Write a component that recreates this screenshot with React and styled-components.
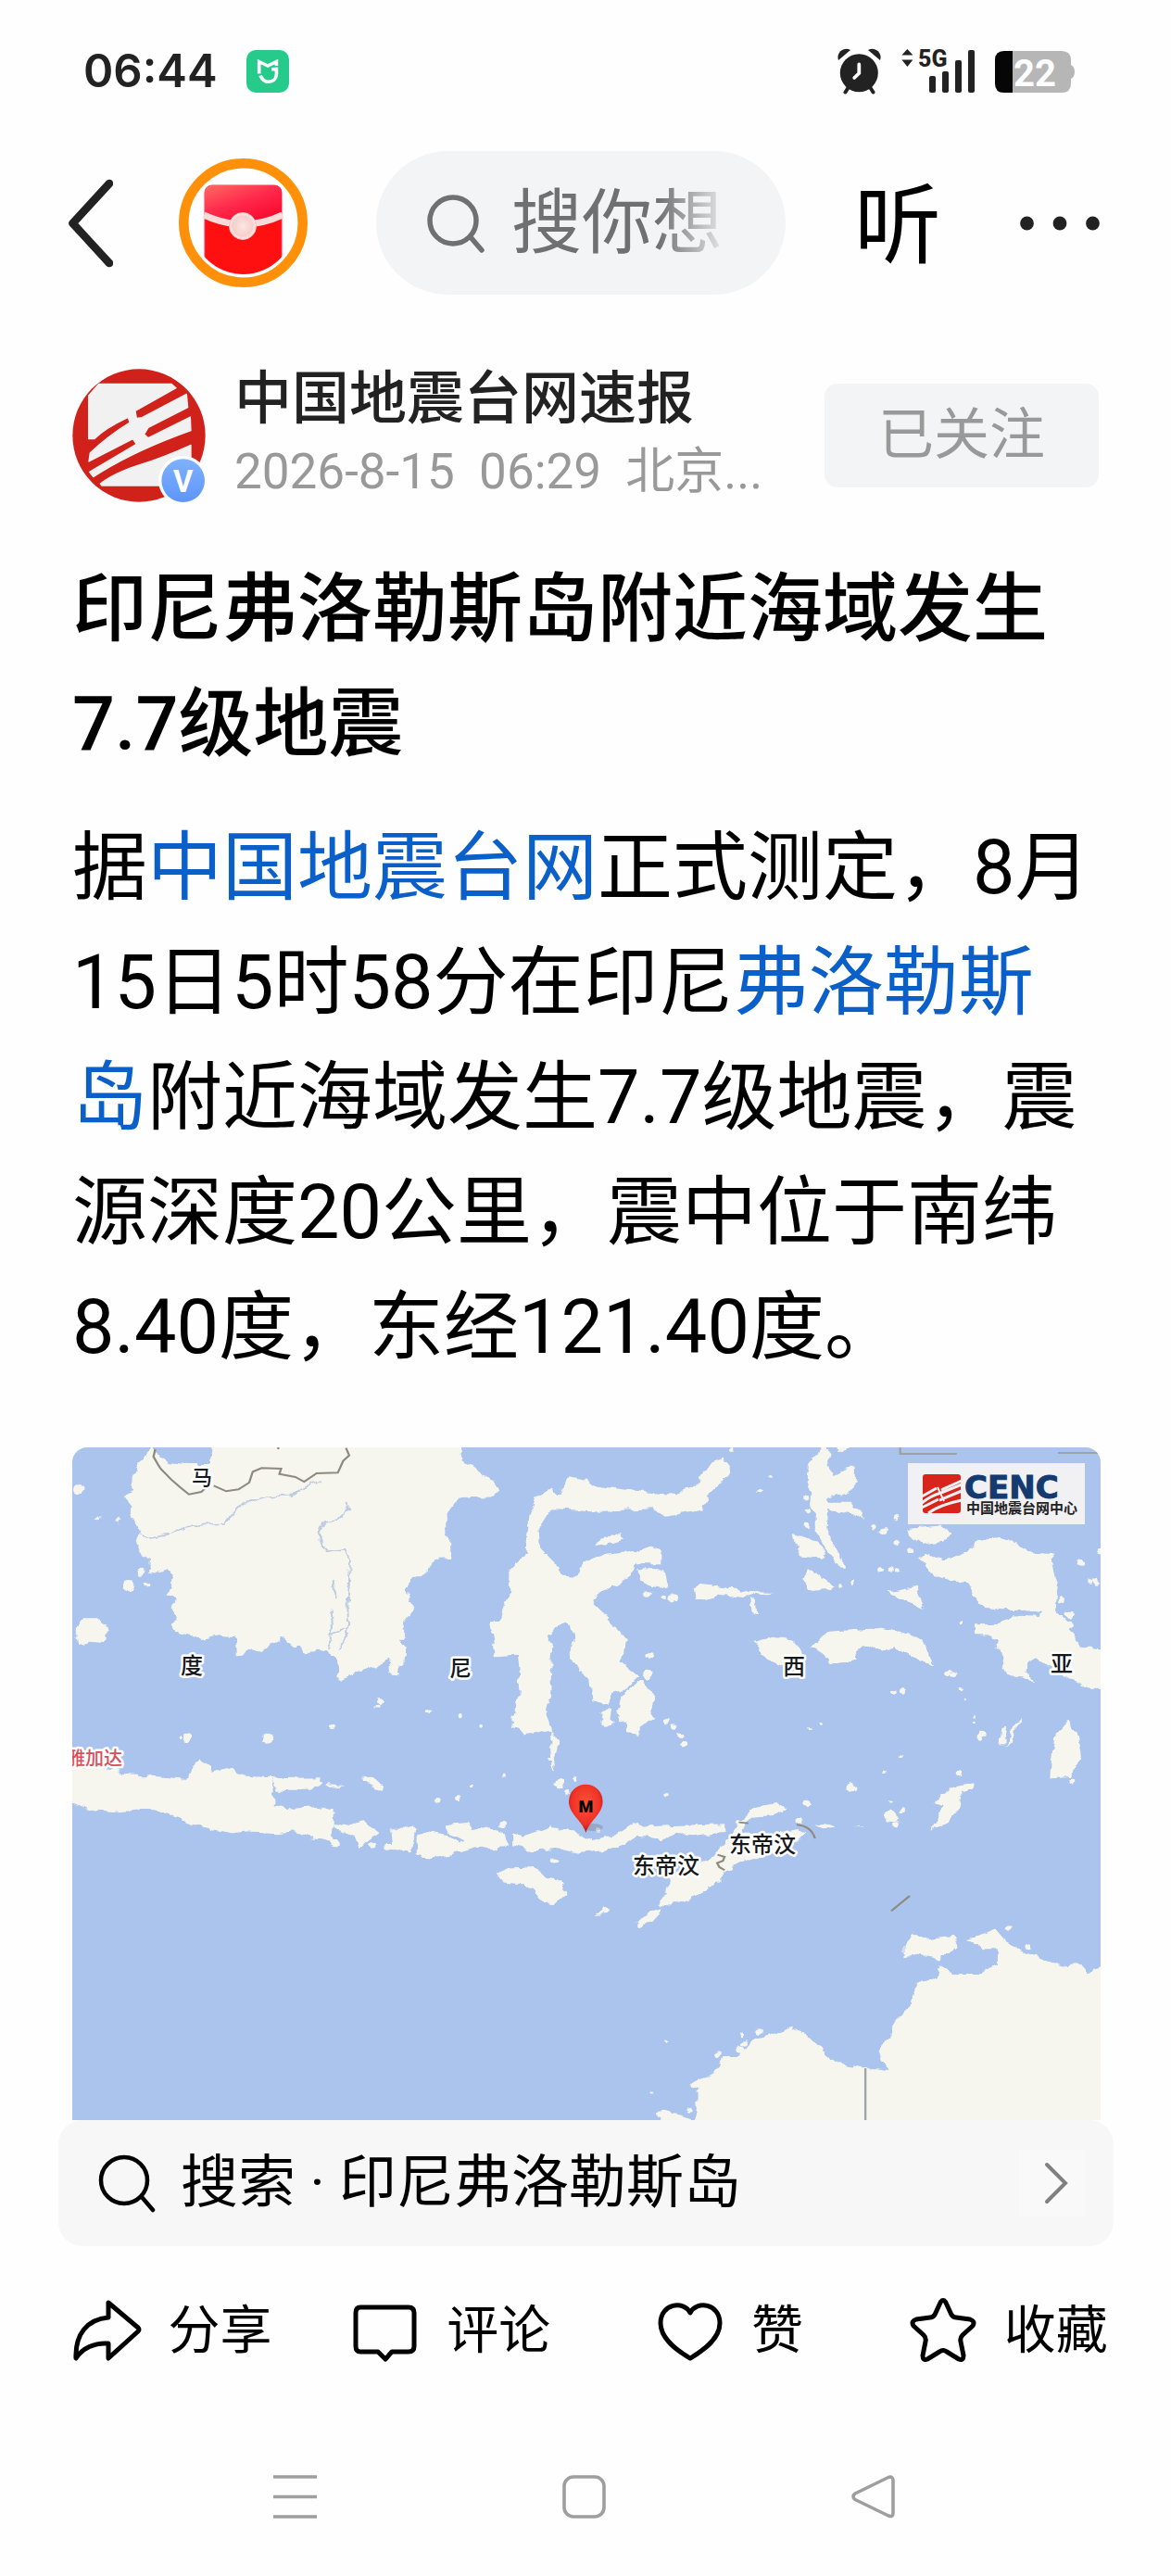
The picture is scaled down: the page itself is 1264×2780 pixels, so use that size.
import React from 'react';
import styled, { createGlobalStyle, css } from 'styled-components';

const GlobalStyle = createGlobalStyle`
  * {
    box-sizing: border-box;
  }

  body {
    margin: 0;
    background: #fefefe;
    color: #000;
    font-family: Roboto, "Noto Sans CJK SC", sans-serif;
  }

  button {
    display: flex;
    align-items: center;
    justify-content: center;
    padding: 0;
    border: 0;
    background: none;
    color: inherit;
    font: inherit;
    cursor: pointer;
  }

  svg {
    display: block;
    flex: none;
  }
`;

const row = css`
  display: flex;
  align-items: center;
`;

/* Status bar */

const StatusBar = styled.div`
  ${row}
  justify-content: space-between;
  height: 154px;
  padding: 0 104px 0 90px;
`;

const StatusGroup = styled.div`
  ${row}
  gap: ${({ gap }) => gap}px;
`;

const Clock = styled.time`
  color: #222;
  font: 600 49px/60px Inter, sans-serif;
`;

const MiHomeIcon = () => (
  <svg width="46" height="46" viewBox="0 0 46 46" fill="none" stroke="#fff" strokeWidth="3.6">
    <rect width="46" height="46" rx="10" fill="#26cb8c" stroke="none" />
    <path d="M13.7 25.5V12.5L23 17L32.4 12.5V17" />
    <path d="M15 27.5C17 32 20 34.3 23.5 34.3C29 34.3 32.4 30.5 32.4 25.5V20.5L27 20.8" />
  </svg>
);

const AlarmIcon = () => (
  <svg width="47" height="50" viewBox="0 0 47 50" fill="#222">
    <circle cx="23.3" cy="26.7" r="20.5" />
    <path d="M1 13C-2 5 7-2 14 2Z" />
    <path d="M46 13C49 5 40-2 33 2Z" />
    <path d="M12 42L8.5 47.5M35 42L38.5 47.5" stroke="#222" strokeWidth="4" strokeLinecap="round" />
    <path d="M23.3 17.5V27L18.2 32" fill="none" stroke="#fff" strokeWidth="3.8" strokeLinecap="round" />
  </svg>
);

const SignalIcon = () => (
  <svg width="79" height="50" viewBox="0 0 79 50" fill="#222" overflow="visible">
    <path d="M6.4 1L12.4 7.4H.4ZM6.4 20L12.4 12.6H.4Z" />
    <text x="18" y="20" fontSize="25" fontWeight="800">5G</text>
    <rect x="30" y="30" width="7" height="18" rx="2" />
    <rect x="44" y="25" width="7" height="23" rx="2" />
    <rect x="58" y="13" width="7" height="35" rx="2" />
    <rect x="72" y="2" width="7" height="46" rx="2" />
  </svg>
);

const BatteryIcon = ({ level }) => (
  <svg width="86" height="45" viewBox="0 0 86 45" overflow="visible">
    <path d="M10 0H72Q82 0 82 10V15Q86 17 86 22.5T82 30V35Q82 45 72 45H10Q0 45 0 35V10Q0 0 10 0Z" fill="#b6b6b6" />
    <path d="M19 0H10Q0 0 0 10V35Q0 45 10 45H19Z" fill="#060606" />
    <text x="20" y="38" fontSize="40" fontWeight="700" fill="#fff">{level}</text>
  </svg>
);

/* Header */

const Header = styled.header`
  ${row}
  margin-top: 9px;
  padding: 0 77px 0 74px;
`;

const BackButton = styled.button`
  margin-right: 71px;
`;

const RedPacketButton = styled.button`
  margin-right: 74px;
`;

const SearchPill = styled.label`
  ${row}
  flex: 1;
  min-width: 0;
  height: 155px;
  gap: 28px;
  padding: 0 70px 0 54px;
  border-radius: 78px;
  background: #f3f4f6;
`;

const SearchInput = styled.input`
  flex: 1;
  width: 0;
  height: 110px;
  padding: 0;
  border: 0;
  outline: 0;
  background: none;
  font: 400 76px/110px Roboto, "Noto Sans CJK SC", sans-serif;
  mask-image: linear-gradient(90deg, #000 70%, rgba(0, 0, 0, 0.15));

  &::placeholder {
    color: #6f7072;
    opacity: 1;
  }
`;

const ListenButton = styled.button`
  margin: 0 85px 0 74px;
  padding-top: 8px;
  font-size: 94px;
  line-height: 120px;
`;

const BackIcon = () => (
  <svg width="48" height="96" viewBox="0 0 48 96" fill="none" stroke="#222" strokeWidth="8.5" strokeLinecap="round" strokeLinejoin="round">
    <path d="M44 5L4.5 48L44 91" />
  </svg>
);

const RedPacketIcon = () => (
  <svg width="139" height="139" viewBox="0 0 139 139">
    <defs>
      <linearGradient id="flap" x1="0" y1="0" x2="0.7" y2="1">
        <stop offset="0" stopColor="#ff6a62" />
        <stop offset="0.5" stopColor="#ff2a4c" />
        <stop offset="1" stopColor="#f8062c" />
      </linearGradient>
      <radialGradient id="knob">
        <stop offset="0" stopColor="#fbe6e4" />
        <stop offset="0.75" stopColor="#f6cfcc" />
        <stop offset="1" stopColor="#fff0ee" />
      </radialGradient>
      <clipPath id="packetRound">
        <circle cx="69.5" cy="69.5" r="55.5" />
      </clipPath>
    </defs>
    <circle cx="69.5" cy="69.5" r="64.2" fill="#fff" stroke="#ff9009" strokeWidth="10.6" />
    <g clipPath="url(#packetRound)">
      <rect x="28" y="29" width="83" height="100" rx="8" fill="#ff1010" stroke="#ff2c68" strokeWidth="1" />
      <path d="M28 62V37Q28 29 36 29H103Q111 29 111 37V62Q69.5 80 28 62Z" fill="url(#flap)" />
      <path d="M27 61Q69.5 81 112 61" fill="none" stroke="#fbdad8" strokeWidth="7" />
    </g>
    <circle cx="69" cy="73" r="14.5" fill="url(#knob)" stroke="#f4bcb9" strokeWidth="1" />
  </svg>
);

const SearchIcon = ({ color, width }) => (
  <svg width="64" height="64" viewBox="0 0 64 64" fill="none" stroke={color} strokeWidth={width} strokeLinecap="round">
    <circle cx="29" cy="29" r="25" />
    <path d="M48 47L60 61" />
  </svg>
);

const MoreIcon = () => (
  <svg width="86" height="16" viewBox="0 0 86 16" fill="#222">
    <circle cx="7.5" cy="8" r="7.4" />
    <circle cx="43" cy="8" r="7.4" />
    <circle cx="78.5" cy="8" r="7.4" />
  </svg>
);

/* Article */

const Article = styled.article`
  padding: 74px 76px 0 78px;
`;

const AuthorRow = styled.div`
  ${row}
`;

const AuthorText = styled.div`
  flex: 1;
  min-width: 0;
  margin-left: 31px;
  line-height: 78px;
  white-space: pre;
`;

const AuthorName = styled.a`
  display: block;
  color: #222;
  font-size: 62px;
  font-weight: 500;
  text-decoration: none;
`;

const Meta = styled.div`
  color: #999;
  font-size: 53px;
`;

const FollowButton = styled.button`
  width: 296px;
  height: 112px;
  margin-right: 2px;
  border-radius: 14px;
  background: #f3f4f6;
  color: #999;
  font-size: 60px;
  line-height: 72px;
`;

const Title = styled.h1`
  margin: 48px 0 0;
  font-size: 81px;
  font-weight: 500;
  line-height: 124px;
`;

const Body = styled.p`
  margin: 31px 0 67px;
  font-size: 81px;
  line-height: 124px;
`;

const Topic = styled.a`
  color: #0a60c8;
  text-decoration: none;
`;

const MapFrame = styled.div`
  overflow: hidden;
  border-radius: 16px 16px 0 0;

  svg {
    width: 100%;
    height: auto;
  }
`;

const AvatarIcon = () => (
  <svg width="144" height="144" viewBox="0 0 432 432" role="img" aria-label="中国地震台网速报">
    <defs>
      <linearGradient id="verified" x1="0" y1="0" x2="0" y2="1">
        <stop offset="0" stopColor="#80b1fb" />
        <stop offset="1" stopColor="#5d95fd" />
      </linearGradient>
    </defs>
    <circle cx="216" cy="216" r="215" fill="#d0211b" />
    <g fill="#f1f1f1" transform="translate(-54 -78)" strokeLinejoin="round" stroke="#f1f1f1" strokeWidth="4">
      <path d="M107 165L140 127H375L390 140L258 214L262 238L280 236L424 160L428 203L300 268L287 290L300 302L436 234L438 278Q250 345 122 428L110 412L262 322L250 305L108 378L112 350Q170 295 240 252L235 235Q160 270 125 305L107 305Z" />
      <path d="M145 450Q190 415 270 390T438 325V456H150Z" />
    </g>
    <circle cx="359" cy="362" r="80" fill="#fff" />
    <circle cx="359" cy="362" r="70" fill="url(#verified)" />
    <text x="359" y="399" fontSize="98" fontWeight="700" fill="#fff" textAnchor="middle">V</text>
  </svg>
);

// Coastlines, in survey units; the map group scales them to the drawing.
const land = [
  // Borneo
  'M250 36L225 60 205 100 190 130 188 175 165 195 185 215 182 250 200 275 210 310 200 340 215 380 240 400 238 445 285 428 302 450 300 490 288 510 310 525 305 560 315 590 305 610 320 640 385 657 440 645 480 648 483 712 500 710 530 688 560 697 615 655 650 688 665 675 675 700 740 693 768 715 773 788 915 725 922 770 940 772 945 740 960 735 962 690 940 650 955 650 960 600 985 560 968 530 960 495 980 460 1020 440 1045 400 1085 395 1085 345 1068 320 1080 290 1078 250 1110 200 1150 195 1205 197 1225 180 1215 155 1190 130 1120 75 1110 20 415 20 410 90 350 90 290 85 268 65Z',
  // Sulawesi
  'M1856 70L1876 100 1871 125 1841 165 1816 195 1796 238 1696 260 1656 235 1516 242 1380 235 1355 250 1337 300 1340 360 1390 420 1400 452 1440 455 1470 405 1495 388 1568 378 1606 375 1646 357 1681 368 1681 412 1616 412 1591 460 1516 505 1490 530 1516 565 1541 610 1586 655 1581 700 1566 730 1621 780 1576 822 1546 835 1536 870 1485 855 1480 790 1440 740 1420 700 1435 660 1430 612 1410 605 1360 645 1375 680 1370 830 1360 900 1370 950 1300 965 1262 945 1270 880 1285 830 1275 710 1215 715 1200 600 1225 600 1240 540 1255 510 1255 430 1300 375 1310 260 1330 195 1370 170 1390 190 1420 130 1470 140 1490 160 1646 182 1731 190 1786 150 1816 90Z',
  'M1576 830L1630 790 1660 840 1650 900 1660 915 1620 940 1615 965 1585 960 1590 930 1560 925 1565 860Z',
  'M1495 355L1530 325 1566 312 1578 335 1530 348Z',
  'M1370 950L1392 1000 1378 1090 1370 1020Z',
  'M1616 430L1690 430 1700 495 1650 485 1620 465Z',
  'M1771 490L1796 480 1866 490 1926 503 2001 507 1916 522 1846 512 1776 532Z',
  'M1934 522L1951 530 1956 585 1941 575Z',
  // Maluku
  'M2140 20L2161 50 2151 90 2161 130 2196 105 2231 100 2231 150 2206 185 2150 200 2156 215 2216 215 2231 235 2256 270 2216 250 2151 240 2146 300 2176 370 2201 425 2186 425 2136 345 2121 310 2121 250 2104 230 2106 190 2094 160 2098 90 2126 55Z',
  'M2172 30L2216 30 2206 52 2180 50Z',
  'M2056 315L2121 340 2146 370 2136 395 2076 385 2061 350Z',
  'M2096 430L2116 445 2171 485 2161 495 2096 497 2081 455Z',
  'M2321 505L2401 488 2416 530 2426 555 2376 535Z',
  'M2376 300L2466 290 2501 320 2476 338 2416 350 2381 320Z',
  'M1946 665L1996 650 2056 658 2081 700 2086 745 2016 740 1956 700Z',
  'M2101 685L2156 632 2256 625 2306 620 2396 645 2421 665 2456 750 2416 725 2346 685 2306 695 2251 675 2231 695 2236 725 2156 740 2146 710 2116 688Z',
  // New Guinea
  'M2401 395L2431 380 2476 400 2551 375 2576 340 2626 328 2676 340 2716 375 2781 378 2791 440 2801 480 2791 560 2826 600 2861 680 2950 690 2950 820 2896 818 2836 785 2806 765 2771 745 2736 715 2716 730 2711 765 2736 798 2701 778 2661 775 2641 720 2631 660 2606 640 2566 640 2566 610 2636 608 2676 580 2751 585 2754 570 2686 560 2646 562 2596 555 2566 520 2551 475 2496 468 2441 445 2426 410Z',
  'M2831 920L2856 970 2866 1030 2841 1100 2781 1105 2786 1040 2796 960Z',
  'M2640 940L2655 935 2650 1000 2635 1000ZM2680 930L2695 915 2672 990 2655 1005Z',
  // Bangka
  'M30 625L50 592 90 592 120 610 125 640 115 670 70 665 40 675Z',
  // Java and the Lesser Sunda Islands
  'M-40 1065L150 1075 160 1095 250 1100 345 1110 365 1060 385 1048 410 1065 415 1085 460 1075 510 1100 580 1105 590 1195 640 1205 715 1200 757 1210 757 1250 755 1315 700 1300 640 1280 600 1285 520 1280 470 1285 370 1260 320 1235 250 1210 200 1208 130 1215 80 1210 -40 1170Z',
  'M580 1108L720 1105 730 1120 690 1145 595 1145Z',
  'M735 1128L795 1135 740 1140ZM835 1100L870 1105 900 1135 890 1142 835 1118Z',
  'M757 1250L800 1260 840 1245 885 1285 850 1312 830 1335 815 1300 760 1265Z',
  'M920 1275L950 1262 992 1270 975 1345 900 1340 900 1320 925 1320Z',
  'M995 1290L1030 1280 1080 1290 1110 1315 1125 1310 1085 1285 1070 1258 1135 1250 1150 1275 1190 1265 1230 1280 1250 1320 1210 1340 1160 1330 1085 1355 1025 1370 992 1350Z',
  'M1265 1285L1290 1295 1320 1285 1370 1265 1430 1280 1480 1310 1550 1290 1616 1250 1631 1265 1716 1260 1861 1255 1861 1280 1786 1295 1726 1290 1686 1305 1616 1295 1586 1320 1520 1342 1450 1350 1390 1335 1310 1340 1265 1325Z',
  'M1220 1415L1250 1400 1325 1395 1360 1430 1390 1435 1415 1480 1380 1512 1350 1510 1325 1470 1290 1450 1235 1445Z',
  'M1490 1548L1535 1528 1530 1545Z',
  // Timor
  'M2086 1285L2056 1320 1996 1350 1956 1365 1891 1385 1856 1420 1816 1470 1786 1490 1746 1505 1706 1520 1671 1515 1696 1480 1706 1420 1786 1380 1836 1355 1861 1315 1886 1285 1901 1245 1926 1240 1906 1285 1986 1290 2066 1275Z',
  'M1606 1570L1646 1550 1681 1525 1684 1550 1621 1590Z',
  'M1921 1235L1941 1200 2011 1188 2036 1205 1996 1230 1936 1235 1906 1280 1895 1270Z',
  'M2111 1260L2150 1252 2176 1265 2140 1270ZM2226 1258L2260 1268 2235 1265Z',
  'M2521 1130L2561 1120 2566 1150 2531 1155 2526 1200 2486 1250 2436 1280 2466 1230 2481 1195 2446 1185 2501 1140Z',
  // Australia
  'M1781 2230L1781 2120 1826 2070 1861 2010 1896 2010 1946 1950 2016 1930 2046 1915 2091 1935 2136 1985 2181 2030 2256 2045 2316 2055 2296 1990 2331 1940 2346 1880 2376 1860 2401 1770 2461 1750 2471 1710 2501 1740 2576 1740 2631 1710 2631 1660 2586 1660 2546 1630 2626 1595 2661 1640 2716 1680 2816 1715 2866 1710 2886 1735 2950 1710 2950 2230Z',
  'M2366 1650L2396 1610 2436 1630 2501 1620 2521 1650 2466 1700 2416 1680 2366 1690Z',
  'M1761 2100L1846 2050 1850 2070 1790 2110ZM1666 2195L1696 2185 1781 2213 1690 2225Z',
];

// Small islands: x, y, radius
const islets = [
  [40, 170, 14], [95, 262, 6], [152, 275, 5], [180, 485, 17], [215, 440, 12], [232, 480, 7], [572, 977, 15],
  [755, 940, 8], [890, 855, 12], [882, 875, 6], [345, 978, 13], [322, 972, 6], [1027, 888, 6], [1115, 905, 8],
  [1175, 935, 6], [1527, 900, 16], [1527, 925, 16], [1646, 770, 15], [1649, 712, 10], [1646, 508, 10],
  [1716, 525, 14], [1690, 520, 8], [1696, 920, 11], [1720, 945, 8], [1736, 970, 8], [1746, 995, 8],
  [1987, 132, 6], [1962, 176, 5], [1882, 42, 6], [2091, 200, 8], [2093, 240, 7], [2094, 290, 10],
  [2285, 293, 8], [2310, 308, 10], [2347, 260, 8], [2348, 347, 8], [2385, 370, 9], [2300, 432, 8],
  [2330, 432, 8], [2350, 432, 8], [2188, 485, 5], [2222, 472, 5], [2525, 603, 7], [2866, 412, 13],
  [2888, 468, 8], [2905, 468, 8], [2812, 530, 9], [2832, 580, 11], [2834, 610, 11], [2918, 375, 10],
  [2490, 765, 10], [2504, 775, 8], [2530, 820, 6], [2540, 850, 5], [2338, 828, 8], [2362, 828, 8],
  [2566, 905, 5], [2566, 925, 5], [2590, 965, 9], [2585, 975, 8], [2840, 1115, 9], [2361, 1038, 6],
  [2311, 1088, 6], [2096, 950, 4], [2133, 930, 5], [2217, 1137, 13], [2096, 1185, 13], [2071, 1245, 8],
  [2331, 1228, 20], [2345, 1255, 9], [2363, 1208, 7], [2328, 1185, 5], [2522, 1090, 9], [1395, 1125, 14],
  [1417, 1152, 8], [1440, 1105, 6], [1370, 1048, 5], [1150, 1130, 6], [1110, 1172, 7], [1050, 1180, 7],
  [1240, 1100, 6], [1235, 1260, 9], [1380, 1373, 9], [868, 1323, 11], [760, 1320, 13], [1505, 1275, 8],
  [1698, 1160, 5], [1526, 1535, 10], [2662, 1590, 8], [2716, 1655, 8], [1694, 1960, 5], [1655, 2127, 5],
  [1845, 2000, 10], [1905, 1985, 12], [1915, 1965, 8], [1910, 1940, 6], [1960, 1925, 10], [1762, 2182, 7],
];

const places = [
  { name: '马', x: 140, y: 40, size: 22 },
  { name: '度', x: 129, y: 244, size: 24 },
  { name: '尼', x: 419, y: 247, size: 24 },
  { name: '西', x: 779, y: 245, size: 24 },
  { name: '亚', x: 1068, y: 242, size: 24 },
  { name: '东帝汶', x: 641, y: 460, size: 24 },
  { name: '东帝汶', x: 745, y: 437, size: 24 },
  { name: '雅加达', x: 24, y: 343, size: 20, color: '#d8505c' },
];

const EpicentreMap = () => (
  <MapFrame>
    <svg viewBox="0 0 1110 726" role="img" aria-label="震中位置图">
      <defs>
        <filter id="coast" filterUnits="userSpaceOnUse" x="-40" y="0" width="3000" height="2260" colorInterpolationFilters="sRGB">
          <feTurbulence type="fractalNoise" baseFrequency="0.03" numOctaves="3" seed="4" />
          <feDisplacementMap in="SourceGraphic" scale="24" xChannelSelector="R" yChannelSelector="G" />
        </filter>
        <radialGradient id="pin" cx="0.5" cy="0.4" r="0.6">
          <stop offset="0" stopColor="#ff5238" />
          <stop offset="0.7" stopColor="#ee3226" />
          <stop offset="1" stopColor="#b5141b" />
        </radialGradient>
      </defs>
      <rect width="1110" height="726" fill="#abc4ed" />
      <g transform="translate(-8 -12) scale(0.3827 0.3333)" fill="none">
        <g fill="#f6f6ee" filter="url(#coast)">
          {land.map((d) => <path key={d} d={d} />)}
          {islets.map(([x, y, r]) => <circle key={`${x}-${y}`} cx={x} cy={y} r={r} />)}
        </g>
        <g stroke="#bccbe3" strokeWidth="5" filter="url(#coast)">
          <path d="M205 315L240 330 290 320 350 290 450 282 500 220 570 195 640 190 720 140" />
          <path d="M790 210L800 235 770 270 735 275 715 320 740 375 790 368 805 400 798 560 800 620 770 690" />
          <path d="M757 465L762 520M752 560L755 620 745 690M755 640L790 625" />
        </g>
        <g stroke="#8e8a80" strokeWidth="6">
          <path d="M255 42L250 66 262 90 270 105 300 140 325 165 350 188 385 180 398 166M420 160L455 178 490 172 520 150 530 115 555 103 610 105 605 122 650 132 675 147 710 120 770 118 785 80 802 62 793 38M602 36V42" />
          <path d="M1841 1355L1861 1362 1856 1375 1840 1382 1846 1395 1861 1405M2064 1258Q2105 1262 2116 1302M1901 1250L1928 1253M2331 1537L2383 1488" />
          <path d="M2356 30V57H2516M2801 54H2914M2258 2046V2230" stroke="#9ba2a8" />
        </g>
      </g>
      <g fontWeight="500" textAnchor="middle" stroke="#fff" strokeWidth="5" strokeLinejoin="round" paintOrder="stroke">
        {places.map(({ name, x, y, size, color }) => (
          <text key={`${name}${x}`} x={x} y={y} fontSize={size} fill={color || '#16181c'}>{name}</text>
        ))}
      </g>

      <ellipse cx="562" cy="410" rx="11" ry="4" fill="#6d7686" opacity="0.35" />
      <path d="M554.5 416C551 403 536 396 536 382A18.3 18.3 0 0 1 572.6 382C572.6 396 558 403 554.5 416Z" fill="url(#pin)" />
      <text x="554.5" y="394" fontSize="18" fontWeight="900" textAnchor="middle">M</text>

      <rect x="902" y="17" width="191" height="66" fill="#f1f0f3" />
      <rect x="918" y="29" width="41" height="42" rx="3" fill="#d8251c" />
      <g fill="none" stroke="#f1f0f3" strokeWidth="3">
        <path d="M917 53L933 44M938 46L960 36M917 60Q927 52 938 49L960 40M917 65L935 56M936 57L960 47M924 71Q936 62 960 57" />
        <path d="M934 43L941 58" strokeWidth="2" />
      </g>
      <text x="963" y="55" fontSize="34" fontWeight="900" fontFamily="DejaVu Sans" fill="#143a70" stroke="#143a70" strokeWidth="1">CENC</text>
      <text x="965" y="71" fontSize="15" fontWeight="700" fill="#222">中国地震台网中心</text>
    </svg>
  </MapFrame>
);

/* Related search */

const RelatedSearch = styled.a`
  ${row}
  height: 136px;
  margin: 0 62px 0 63px;
  padding: 0 31px 0 42px;
  border-radius: 26px;
  background: #f7f7f7;
  color: #000;
  font-size: 62px;
  line-height: 72px;
  text-decoration: none;
`;

const RelatedText = styled.span`
  flex: 1;
  margin-left: 26px;
`;

const ChevronBox = styled.span`
  display: grid;
  place-items: center;
  width: 71px;
  height: 72px;
  padding-left: 8px;
  background: #f9f9fa;
`;

/* Bottom actions and system navigation */

const Actions = styled.div`
  display: grid;
  grid-template-columns: repeat(4, 1fr);
  padding: 55px 25px 0 36px;
`;

const Action = styled.button`
  && {
    gap: 30px;
  }
  height: 72px;
  font-size: 56px;
  line-height: 72px;
  white-space: nowrap;
`;

const actionIcons = {
  share: 'M38 4L70 31Q72 33 70 35L38 64V48C23 47 10 53 3 64C2 38 15 22 38 20Z',
  comment: 'M9 9H61Q67 9 67 15V51Q67 57 61 57H43L36 65L28 57H9Q4 57 4 51V15Q4 9 9 9Z',
  heart: 'M36 64C19 54 4 42 4 26C4 5 29 1 36 15C43 1 68 5 68 26C68 42 53 54 36 64Z',
  star: 'M33.5 3Q36 0 38.5 3L45 17Q47 20 50 20L65 22Q71 24 68 29L57 39Q54 42 55 46L58 61Q58 67 53 65L40 57Q36 54 32 57L19 65Q14 67 14 61L17 46Q18 42 15 39L4 29Q1 24 7 22L22 20Q25 20 27 17Z',
};

const actions = [
  { icon: 'share', label: '分享' },
  { icon: 'comment', label: '评论' },
  { icon: 'heart', label: '赞' },
  { icon: 'star', label: '收藏' },
];

const ActionIcon = ({ name }) => (
  <svg width="72" height="68" viewBox="0 0 72 68" fill="none" stroke="#000" strokeWidth="5" strokeLinejoin="round" overflow="visible">
    <path d={actionIcons[name]} />
  </svg>
);

const SystemNav = styled.nav`
  display: flex;
  justify-content: center;
  gap: 265px;
  padding: 120px 4px 62px 0;
`;

const NavIcon = ({ children }) => (
  <svg width="47" height="47" viewBox="0 0 47 47" fill="none" stroke="#9e9e9e" strokeWidth="3.6" strokeLinejoin="round">
    {children}
  </svg>
);

const App = () => (
  <>
    <GlobalStyle />
    <StatusBar>
      <StatusGroup gap={31}>
        <Clock>06:44</Clock>
        <MiHomeIcon />
      </StatusGroup>
      <StatusGroup gap={22}>
        <AlarmIcon />
        <SignalIcon />
        <BatteryIcon level={22} />
      </StatusGroup>
    </StatusBar>

    <Header>
      <BackButton type="button" aria-label="返回"><BackIcon /></BackButton>
      <RedPacketButton type="button" aria-label="红包"><RedPacketIcon /></RedPacketButton>
      <SearchPill>
        <SearchIcon color="#6f7072" width={5.5} />
        <SearchInput type="text" placeholder="搜你想" aria-label="搜索" />
      </SearchPill>
      <ListenButton type="button">听</ListenButton>
      <button type="button" aria-label="更多"><MoreIcon /></button>
    </Header>

    <main lang="zh-CN">
      <Article>
        <AuthorRow>
          <AvatarIcon />
          <AuthorText>
            <AuthorName href="#author">中国地震台网速报</AuthorName>
            <Meta>{'2026-8-15  06:29  北京...'}</Meta>
          </AuthorText>
          <FollowButton type="button">已关注</FollowButton>
        </AuthorRow>
        <Title>印尼弗洛勒斯岛附近海域发生7.7级地震</Title>
        <Body>
          据<Topic href="#cenc">中国地震台网</Topic>正式测定，8月15日5时58分在印尼<Topic href="#flores">弗洛勒斯岛</Topic>附近海域发生7.7级地震，震源深度20公里，震中位于南纬8.40度，东经121.40度。
        </Body>
        <EpicentreMap />
      </Article>

      <RelatedSearch href="#search">
        <SearchIcon color="#000" width={4.5} />
        <RelatedText>搜索 · 印尼弗洛勒斯岛</RelatedText>
        <ChevronBox>
          <svg width="26" height="46" viewBox="0 0 26 46" fill="none" stroke="#808080" strokeWidth="4" strokeLinecap="round">
            <path d="M3 3L23 23L3 43" />
          </svg>
        </ChevronBox>
      </RelatedSearch>
    </main>

    <Actions>
      {actions.map(({ icon, label }) => (
        <Action key={icon} type="button">
          <ActionIcon name={icon} />
          {label}
        </Action>
      ))}
    </Actions>

    <SystemNav>
      <button type="button" aria-label="最近任务">
        <NavIcon><path d="M0 2H47M0 23.5H47M0 45H47" /></NavIcon>
      </button>
      <button type="button" aria-label="主屏幕">
        <NavIcon><rect x="2" y="2" width="43" height="43" rx="10" /></NavIcon>
      </button>
      <button type="button" aria-label="后退">
        <NavIcon><path d="M40 2.5L4 20Q0 23 4 26.5L40 44Q45 46 45 41V6Q45 1 40 2.5Z" /></NavIcon>
      </button>
    </SystemNav>
  </>
);

export default App;
